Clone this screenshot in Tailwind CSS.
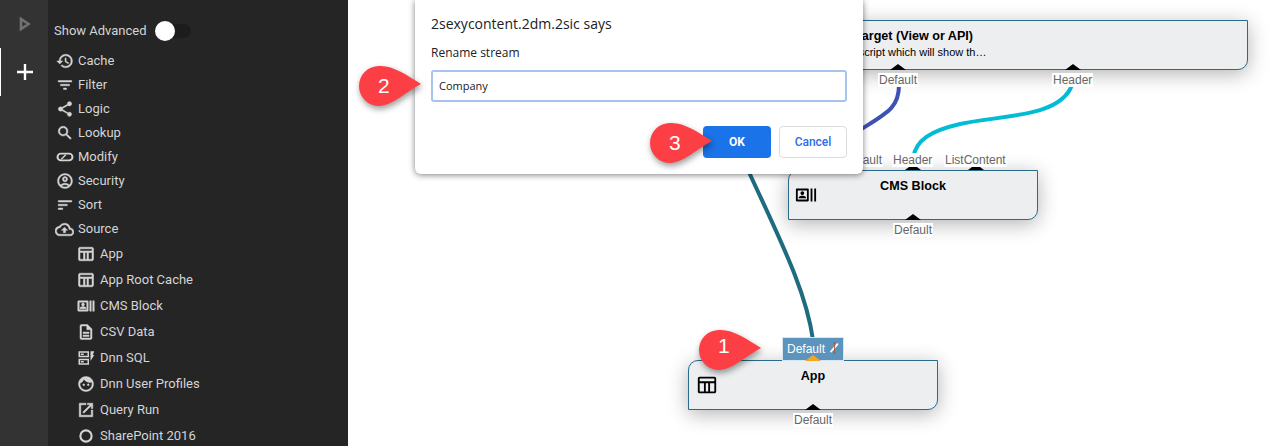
<!DOCTYPE html>
<html lang="en">
<head>
    <meta charset="UTF-8">
    <title>Query Designer</title>
    <script src="https://cdn.jsdelivr.net/npm/@tailwindcss/browser@4"></script>
</head>
<body class="h-screen overflow-hidden flex bg-white font-['Roboto',sans-serif]">
    <!-- left rail -->
    <div class="w-[48px] shrink-0 bg-[#333333] flex flex-col">
        <div class="h-[48px] flex items-center justify-center">
            <svg class="w-[24px] h-[24px]" viewBox="0 0 24 24" fill="none" stroke="#717171" stroke-width="2.600"><path d="M9 7v10l7.500-5z"/></svg>
        </div>
        <div class="h-[48px] flex items-center justify-center border-l border-white">
            <svg class="w-[24px] h-[24px]" viewBox="0 0 24 24" fill="#ffffff"><path d="M20 13.200h-6.800V20h-2.400v-6.800H4v-2.400h6.800V4h2.400v6.800H20z"/></svg>
        </div>
    </div>

    <!-- data source list -->
    <div class="w-[300px] shrink-0 bg-[#252526] text-[#d4d4d4] text-[13px] leading-[24px]">
        <div class="h-[48px] pl-[6px] pt-[14px] flex items-center">
            <span>Show Advanced</span>
            <span class="relative ml-[8px] w-[36px] h-[14px] rounded-full bg-[#1c1c1d]">
                <span class="absolute left-0 top-[-3px] w-[20px] h-[20px] rounded-full bg-white"></span>
            </span>
        </div>
        <div class="pt-px">
            <div class="h-[24px] pl-[8px] flex items-center gap-[4px]"><svg class="w-[18px] h-[18px]" viewBox="0 0 24 24" fill="currentColor" stroke="currentColor" stroke-width="0.600"><path d="M13 3a9 9 0 0 0-9 9H1l3.890 3.890.07.14L9 12H6c0-3.870 3.130-7 7-7s7 3.130 7 7-3.130 7-7 7c-1.930 0-3.680-.79-4.940-2.060l-1.420 1.420A8.954 8.954 0 0 0 13 21a9 9 0 0 0 0-18zm-1 5v5l4.280 2.540.72-1.210-3.500-2.080V8H12z"/></svg>Cache</div>
            <div class="h-[24px] pl-[8px] flex items-center gap-[4px]"><svg class="w-[18px] h-[18px]" viewBox="0 0 24 24" fill="currentColor" stroke="currentColor" stroke-width="0.600"><path d="M10 18h4v-2h-4v2zM3 6v2h18V6H3zm3 7h12v-2H6v2z"/></svg>Filter</div>
            <div class="h-[24px] pl-[8px] flex items-center gap-[4px]"><svg class="w-[18px] h-[18px]" viewBox="0 0 24 24" fill="currentColor" stroke="currentColor" stroke-width="0.400"><path d="M18 16.080c-.76 0-1.440.3-1.960.77L8.910 12.700c.05-.23.09-.46.09-.7s-.04-.47-.09-.7l7.050-4.110c.54.5 1.250.81 2.040.81 1.660 0 3-1.340 3-3s-1.340-3-3-3-3 1.340-3 3c0 .24.04.47.09.7L8.040 9.810C7.500 9.310 6.790 9 6 9c-1.660 0-3 1.340-3 3s1.340 3 3 3c.79 0 1.500-.31 2.040-.81l7.120 4.160c-.05.21-.08.43-.08.65 0 1.610 1.310 2.920 2.920 2.920s2.920-1.310 2.920-2.920-1.310-2.920-2.920-2.920z"/></svg>Logic</div>
            <div class="h-[24px] pl-[8px] flex items-center gap-[4px]"><svg class="w-[18px] h-[18px]" viewBox="0 0 24 24" fill="currentColor" stroke="currentColor" stroke-width="0.600"><path d="M15.500 14h-.79l-.28-.27A6.471 6.471 0 0 0 16 9.500 6.500 6.500 0 1 0 9.500 16c1.610 0 3.090-.59 4.230-1.570l.27.28v.79l5 4.990L20.490 19l-4.990-5zm-6 0C7.010 14 5 11.990 5 9.500S7.010 5 9.500 5 14 7.010 14 9.500 11.990 14 9.500 14z"/></svg>Lookup</div>
            <div class="h-[24px] pl-[8px] flex items-center gap-[4px]"><svg class="w-[18px] h-[18px]" viewBox="0 0 24 24" fill="none" stroke="currentColor" stroke-width="2.600"><rect x="2" y="7.500" width="20" height="9" rx="4.500"/><path d="M7 15l6-6" stroke-width="2"/></svg>Modify</div>
            <div class="h-[24px] pl-[8px] flex items-center gap-[4px]"><svg class="w-[18px] h-[18px]" viewBox="0 0 24 24" fill="currentColor" stroke="currentColor" stroke-width="0.500"><path d="M12 2C6.480 2 2 6.480 2 12s4.480 10 10 10 10-4.480 10-10S17.520 2 12 2zM7.350 18.500C8.660 17.560 10.260 17 12 17s3.340.56 4.650 1.500C15.340 19.440 13.740 20 12 20s-3.340-.56-4.650-1.500zm10.790-1.380C16.450 15.800 14.320 15 12 15s-4.450.8-6.140 2.120C4.700 15.730 4 13.950 4 12c0-4.420 3.580-8 8-8s8 3.580 8 8c0 1.950-.7 3.730-1.860 5.120zM12 6c-1.930 0-3.500 1.570-3.500 3.500S10.070 13 12 13s3.500-1.570 3.500-3.500S13.930 6 12 6zm0 5c-.83 0-1.500-.67-1.500-1.500S11.170 8 12 8s1.500.67 1.500 1.500S12.830 11 12 11z"/></svg>Security</div>
            <div class="h-[24px] pl-[8px] flex items-center gap-[4px]"><svg class="w-[18px] h-[18px]" viewBox="0 0 24 24" fill="currentColor" stroke="currentColor" stroke-width="0.600"><path d="M3 18h6v-2H3v2zM3 6v2h18V6H3zm0 7h12v-2H3v2z"/></svg>Sort</div>
            <div class="h-[24px] pl-[7px] flex items-center gap-[4px]"><svg class="w-[19px] h-[19px]" viewBox="0 0 24 24" fill="currentColor" stroke="currentColor" stroke-width="0.500"><path d="M19.350 10.040A7.490 7.490 0 0 0 12 4C9.110 4 6.600 5.640 5.350 8.040A5.994 5.994 0 0 0 0 14c0 3.310 2.690 6 6 6h13c2.760 0 5-2.240 5-5 0-2.640-2.050-4.780-4.650-4.960zM19 18H6c-2.210 0-4-1.790-4-4 0-2.050 1.530-3.760 3.560-3.970l1.070-.11.5-.95A5.469 5.469 0 0 1 12 6c2.620 0 4.880 1.860 5.390 4.430l.3 1.500 1.530.11A2.980 2.980 0 0 1 22 15c0 1.650-1.350 3-3 3zM8 13h2.550v3h2.900v-3H16l-4-4z"/></svg>Source</div>
        </div>
        <div>
            <div class="h-[26px] pl-[29px] flex items-center gap-[5px]"><svg class="w-[18px] h-[18px]" viewBox="0 0 24 24" fill="currentColor" stroke="currentColor" stroke-width="0.700"><path d="M20 3H4c-1.100 0-2 .9-2 2v14c0 1.100.9 2 2 2h16c1.100 0 2-.9 2-2V5c0-1.100-.9-2-2-2zm0 2v3H4V5h16zM4 19v-9h4.670v9H4zm6.670 0v-9h2.670v9h-2.670zm4.660 0v-9H20v9h-4.670z"/></svg>App</div>
            <div class="h-[26px] pl-[29px] flex items-center gap-[5px]"><svg class="w-[18px] h-[18px]" viewBox="0 0 24 24" fill="currentColor" stroke="currentColor" stroke-width="0.700"><path d="M20 3H4c-1.100 0-2 .9-2 2v14c0 1.100.9 2 2 2h16c1.100 0 2-.9 2-2V5c0-1.100-.9-2-2-2zm0 2v3H4V5h16zM4 19v-9h4.670v9H4zm6.670 0v-9h2.670v9h-2.670zm4.660 0v-9H20v9h-4.670z"/></svg>App Root Cache</div>
            <div class="h-[26px] pl-[29px] flex items-center gap-[5px]"><svg class="w-[18px] h-[18px]" viewBox="0 0 24 24" fill="currentColor" stroke="currentColor" stroke-width="0.600"><path d="M21 5v14h2V5h-2zm-4 14h2V5h-2v14zM14 5H2c-.55 0-1 .45-1 1v12c0 .55.45 1 1 1h12c.55 0 1-.45 1-1V6c0-.55-.45-1-1-1zm-1 12H3V7h10v10zM8 12c1.100 0 2-.9 2-2s-.9-2-2-2-2 .9-2 2 .9 2 2 2zm-4 3.500h8v-.75c0-1.330-2.670-2-4-2s-4 .67-4 2z"/></svg>CMS Block</div>
            <div class="h-[26px] pl-[29px] flex items-center gap-[5px]"><svg class="w-[18px] h-[18px]" viewBox="0 0 24 24" fill="currentColor" stroke="currentColor" stroke-width="0.600"><path d="M8 16h8v2H8zm0-4h8v2H8zm6-10H6c-1.100 0-2 .9-2 2v16c0 1.100.89 2 1.990 2H18c1.100 0 2-.9 2-2V8l-6-6zm4 18H6V4h7v5h5v11z"/></svg>CSV Data</div>
            <div class="h-[26px] pl-[29px] flex items-center gap-[5px]"><svg class="w-[18px] h-[18px]" viewBox="0 0 24 24" fill="currentColor"><path d="M2 3h14v8H2zm2 2v4h10V5zm1 1h4v2H5zM2 13h14v8H2zm2 2v4h10v-4zm1 1h4v2H5zM18 3h5l-2 5h2l-5 8z" fill-rule="evenodd"/></svg>Dnn SQL</div>
            <div class="h-[26px] pl-[29px] flex items-center gap-[5px]"><svg class="w-[18px] h-[18px]" viewBox="0 0 24 24" fill="currentColor" stroke="currentColor" stroke-width="0.600"><path d="M9 11.750a1.250 1.250 0 1 0 0 2.500 1.250 1.250 0 0 0 0-2.500zm6 0a1.250 1.250 0 1 0 0 2.500 1.250 1.250 0 0 0 0-2.500zM12 2C6.480 2 2 6.480 2 12s4.480 10 10 10 10-4.480 10-10S17.520 2 12 2zm0 18c-4.410 0-8-3.590-8-8 0-.29.02-.58.05-.86 2.360-1.050 4.230-2.980 5.210-5.370A9.974 9.974 0 0 0 17.420 10c.86 0 1.690-.1 2.500-.3.25.85.08 1.450.08 2.300 0 4.410-3.590 8-8 8z"/></svg>Dnn User Profiles</div>
            <div class="h-[26px] pl-[29px] flex items-center gap-[5px]"><svg class="w-[18px] h-[18px]" viewBox="0 0 24 24" fill="currentColor" stroke="currentColor" stroke-width="0.700"><path d="M19 19H5V5h7V3H3v18h18v-9h-2v7zM14 3v2h3.590l-9.830 9.830 1.410 1.410L19 6.410V10h2V3h-7z"/></svg>Query Run</div>
            <div class="h-[26px] pl-[29px] flex items-center gap-[5px]"><svg class="w-[18px] h-[18px]" viewBox="0 0 24 24" fill="none" stroke="currentColor" stroke-width="2.800"><circle cx="12" cy="12" r="7.500"/></svg>SharePoint 2016</div>
        </div>
    </div>

    <!-- canvas: positions are the diagram content -->
    <div class="relative flex-1 overflow-hidden bg-white font-['Liberation_Sans',sans-serif]">
        <svg class="absolute left-0 top-0 w-[930px] h-[446px]" viewBox="348 0 930 446" fill="none" stroke-width="4">
            <path d="M813 340C806 290 780 240 748 170" stroke="#1f6b80"/>
            <path d="M899 85C899 108 887 113 860 130" stroke="#3f51b5"/>
            <path d="M1072 85C1060 118 1000 115 960 124C930 131 916 140 913 158" stroke="#00bcd4"/>
        </svg>

        <!-- target node -->
        <div class="absolute left-[442px] top-[20px] w-[458px] h-[50px] bg-[#edeef0] border border-[#2a6a8a] rounded-br-[10px] rounded-tl-[10px] shadow-[0_4px_20px_rgba(0,0,0,0.3)] pl-[20px] pt-[7px] text-black">
            <div class="ml-[44px] text-[12.600px] leading-[16px] font-bold whitespace-nowrap">Target (View or API)</div>
            <div class="text-[11px] leading-[14px] mt-px whitespace-nowrap">Template/script which will show th…</div>
        </div>
        <div class="absolute left-[542px] top-[64px] w-[16px] h-[6px] bg-black [clip-path:polygon(50%_0,100%_100%,0_100%)]"></div>
        <div class="absolute left-[717px] top-[64px] w-[16px] h-[6px] bg-black [clip-path:polygon(50%_0,100%_100%,0_100%)]"></div>
        <span class="absolute left-[530px] top-[73px] px-px bg-white text-[12px] leading-[14px] text-[#666666]">Default</span>
        <span class="absolute left-[704px] top-[73px] px-px bg-white text-[12px] leading-[14px] text-[#666666]">Header</span>

        <!-- cms block node -->
        <div class="absolute left-[440px] top-[170px] w-[250px] h-[50px] bg-[#edeef0] border border-[#2a6a8a] rounded-br-[10px] rounded-tl-[10px] shadow-[0_4px_20px_rgba(0,0,0,0.3)] text-black">
            <div class="text-center text-[12.600px] leading-[16px] font-bold pt-[6px] mt-px">CMS Block</div>
            <svg class="absolute left-[6px] top-[13px] w-[22px] h-[22px]" viewBox="0 0 24 24" fill="#000000"><path d="M21 5v14h2V5h-2zm-4 14h2V5h-2v14zM14 5H2c-.55 0-1 .45-1 1v12c0 .55.45 1 1 1h12c.55 0 1-.45 1-1V6c0-.55-.45-1-1-1zm-1 12H3V7h10v10zM8 12c1.100 0 2-.9 2-2s-.9-2-2-2-2 .9-2 2 .9 2 2 2zm-4 3.500h8v-.75c0-1.330-2.670-2-4-2s-4 .67-4 2z"/></svg>
        </div>
        <div class="absolute left-[557px] top-[164px] w-[16px] h-[6px] bg-black [clip-path:polygon(50%_0,100%_100%,0_100%)]"></div>
        <div class="absolute left-[620px] top-[164px] w-[16px] h-[6px] bg-black [clip-path:polygon(50%_0,100%_100%,0_100%)]"></div>
        <div class="absolute left-[557px] top-[214px] w-[16px] h-[6px] bg-black [clip-path:polygon(50%_0,100%_100%,0_100%)]"></div>
        <span class="absolute left-[495px] top-[153px] px-px bg-white text-[12px] leading-[14px] text-[#666666]">Default</span>
        <span class="absolute left-[544px] top-[153px] px-px bg-white text-[12px] leading-[14px] text-[#666666]">Header</span>
        <span class="absolute left-[596px] top-[153px] px-px bg-white text-[12px] leading-[14px] text-[#666666]">ListContent</span>
        <span class="absolute left-[545px] top-[223px] px-px bg-white text-[12px] leading-[14px] text-[#666666]">Default</span>

        <!-- app node -->
        <div class="absolute left-[340px] top-[360px] w-[250px] h-[50px] bg-[#edeef0] border border-[#2a6a8a] rounded-br-[10px] rounded-tl-[10px] shadow-[0_4px_20px_rgba(0,0,0,0.3)] text-black">
            <div class="text-center text-[12.600px] leading-[16px] font-bold pt-[6px] mt-px">App</div>
            <svg class="absolute left-[7px] top-[13px] w-[22px] h-[22px]" viewBox="0 0 24 24" fill="#000000"><path d="M20 3H4c-1.100 0-2 .9-2 2v14c0 1.100.9 2 2 2h16c1.100 0 2-.9 2-2V5c0-1.100-.9-2-2-2zm0 2v3H4V5h16zM4 19v-9h4.670v9H4zm6.670 0v-9h2.670v9h-2.670zm4.660 0v-9H20v9h-4.670z"/></svg>
        </div>
        <div class="absolute left-[457px] top-[404px] w-[16px] h-[6px] bg-black [clip-path:polygon(50%_0,100%_100%,0_100%)]"></div>
        <span class="absolute left-[445px] top-[413px] px-px bg-white text-[12px] leading-[14px] text-[#666666]">Default</span>
        <div class="absolute left-[434px] top-[337px] w-[62px] h-[24px] bg-[#5b95bd] border border-[#d5e6f2] text-white text-[12px] leading-[22px] pl-[4px] flex">Default
            <svg class="ml-[2px] mt-[3px] w-[14px] h-[14px]" viewBox="0 0 24 24"><path d="M7 20l-2-2L17 4c2-1 3 1 2 3z" fill="#ffffff"/><path d="M11 3h4M13 3v18M11 21h4" stroke="#a8552a" stroke-width="1.500" fill="none"/></svg>
        </div>
        <div class="absolute left-[457px] top-[355px] w-[16px] h-[6px] bg-[#f5a623] [clip-path:polygon(50%_0,100%_100%,0_100%)]"></div>

        <!-- rename dialog -->
        <div class="absolute left-[67px] top-0 w-[448px] h-[174px] bg-white rounded-b-[6px] shadow-[0_1px_6px_rgba(0,0,0,0.5)] px-[16px] text-[#202124] font-['Open_Sans',sans-serif]">
            <div class="pt-[15px] text-[14px] leading-[18px]">2sexycontent.2dm.2sic says</div>
            <div class="pt-[11px] text-[12px] leading-[18px]">Rename stream</div>
            <div class="mt-[8px] h-[32px] border-2 border-[#a5c5ec] rounded-[3px] pl-[6px] text-[11px] leading-[28px]">Company</div>
            <div class="mt-[24px] flex justify-end gap-[8px] text-[12px] font-['Roboto',sans-serif]">
                <div class="w-[68px] h-[32px] rounded-[4px] bg-[#1a73e8] text-white font-bold flex items-center justify-center">OK</div>
                <div class="w-[68px] h-[32px] rounded-[4px] bg-white border border-[#dadce0] text-[#2a6fe8] font-medium flex items-center justify-center">Cancel</div>
            </div>
        </div>

        <!-- numbered callouts -->
        <div class="absolute left-[351px] top-[329px] w-[66px] h-[44px] text-white text-[21px] font-['Liberation_Sans',sans-serif]">
            <svg class="absolute inset-0 w-[66px] h-[44px] drop-shadow-[1px_3px_3px_rgba(0,0,0,0.4)]" viewBox="0 0 66 44"><path d="M20 1C33 0 48 10 62 19C48 26 33 41 20 41A20 20 0 0 1 20 1Z" fill="#fb3f45"/></svg>
            <span class="absolute left-[19px] top-[1px] leading-[32px]">1</span>
        </div>
        <div class="absolute left-[11px] top-[65px] w-[66px] h-[44px] text-white text-[21px] font-['Liberation_Sans',sans-serif]">
            <svg class="absolute inset-0 w-[66px] h-[44px] drop-shadow-[1px_3px_3px_rgba(0,0,0,0.4)]" viewBox="0 0 66 44"><path d="M20 1C33 0 48 10 62 19C48 26 33 41 20 41A20 20 0 0 1 20 1Z" fill="#fb3f45"/></svg>
            <span class="absolute left-[19px] top-[5px] leading-[32px]">2</span>
        </div>
        <div class="absolute left-[302px] top-[122px] w-[66px] h-[44px] text-white text-[21px] font-['Liberation_Sans',sans-serif]">
            <svg class="absolute inset-0 w-[66px] h-[44px] drop-shadow-[1px_3px_3px_rgba(0,0,0,0.4)]" viewBox="0 0 66 44"><path d="M20 1C33 0 48 10 62 19C48 26 33 41 20 41A20 20 0 0 1 20 1Z" fill="#fb3f45"/></svg>
            <span class="absolute left-[19px] top-[5px] leading-[32px]">3</span>
        </div>
    </div>
</body>
</html>
